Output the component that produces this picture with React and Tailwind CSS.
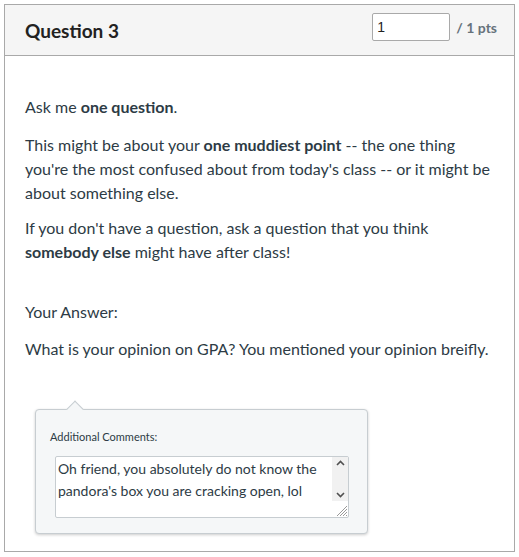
export default function App() {
  return (
    <div className="bg-white w-[519px] h-[557px] pt-[4px] pl-[4px]" style={{ fontFamily: 'Lato, "Open Sans", sans-serif' }}>
      <div className="w-[511px] h-[548px] border border-[#a9a9a9] bg-white text-[#2d3b45]">
        <div className="h-[51px] bg-[#f5f5f5] border-b border-[#a9a9a9] flex items-start justify-between pl-[20px] pr-[17px]">
          <h2 className="text-[19px] font-bold leading-none mt-[16px] text-[#222]">Question 3</h2>
          <div className="flex items-start mt-[8px]">
            <input
              defaultValue="1"
              className="w-[78px] h-[28px] border border-[#a9a9a9] bg-white rounded-[2px] px-[4px] text-[14px] text-[#222] outline-none"
              style={{ fontFamily: '"Liberation Sans", Arial, sans-serif' }}
            />
            <span className="ml-[6px] mt-[4px] text-[14px] font-bold text-[#66727b]">/ 1 pts</span>
          </div>
        </div>

        <div className="pl-[20px] pr-[16px] pt-[39px] text-[16px] leading-[24px]">
          <p className="mb-[14px]">Ask me <b>one question</b>.</p>
          <p className="mb-[11px]">
            This might be about your <b>one muddiest point</b> -- the one thing you're the most confused about from today's class -- or it might be about something else.
          </p>
          <p>
            If you don't have a question, ask a question that you think <b>somebody else</b> might have after class!
          </p>

          <p className="mt-[36px]">Your Answer:</p>
          <p className="mt-[13px]">What is your opinion on GPA? You mentioned your opinion breifly.</p>

          <div className="relative ml-[10px] mt-[48px] w-[333px] h-[125px] bg-[#f5f7f8] border border-[#c7cdd1] rounded-[4px] shadow-[0_1px_3px_rgba(0,0,0,0.2)]">
            <div className="absolute -top-[7px] left-[33px] w-[12px] h-[12px] bg-[#f5f7f8] border-l border-t border-[#c7cdd1] rotate-45" />
            <div className="pl-[14px] pt-[20px] text-[11px] leading-[14px] text-[#2d3b45]">Additional Comments:</div>
            <div className="ml-[19px] mt-[12px] w-[294px] h-[62px] bg-white border border-[#c7cdd1] rounded-[2px] flex">
              <div className="flex-1 pl-[2px] pt-[1px] text-[14px] leading-[22px] text-[#2d3b45]">
                Oh friend, you absolutely do not know the pandora's box you are cracking open, lol
              </div>
              <div className="w-[16px] flex flex-col items-center">
                <div className="w-full h-[44px] bg-[#f1f1f1] flex flex-col items-center justify-between py-[3px]">
                  <svg width="9" height="6" viewBox="0 0 9 6"><path d="M1 5 L4.5 1.5 L8 5" stroke="#505050" strokeWidth="1.6" fill="none" /></svg>
                  <svg width="9" height="6" viewBox="0 0 9 6"><path d="M1 1 L4.5 4.5 L8 1" stroke="#505050" strokeWidth="1.6" fill="none" /></svg>
                </div>
                <div className="flex-1 w-full flex items-end justify-end">
                  <svg width="14" height="14" viewBox="0 0 14 14">
                    <path d="M13 3 L3 13 M13 6 L6 13 M13 9 L9 13 M13 12 L12 13" stroke="#9a9a9a" strokeWidth="1" />
                  </svg>
                </div>
              </div>
            </div>
          </div>
        </div>
      </div>
    </div>
  );
}
